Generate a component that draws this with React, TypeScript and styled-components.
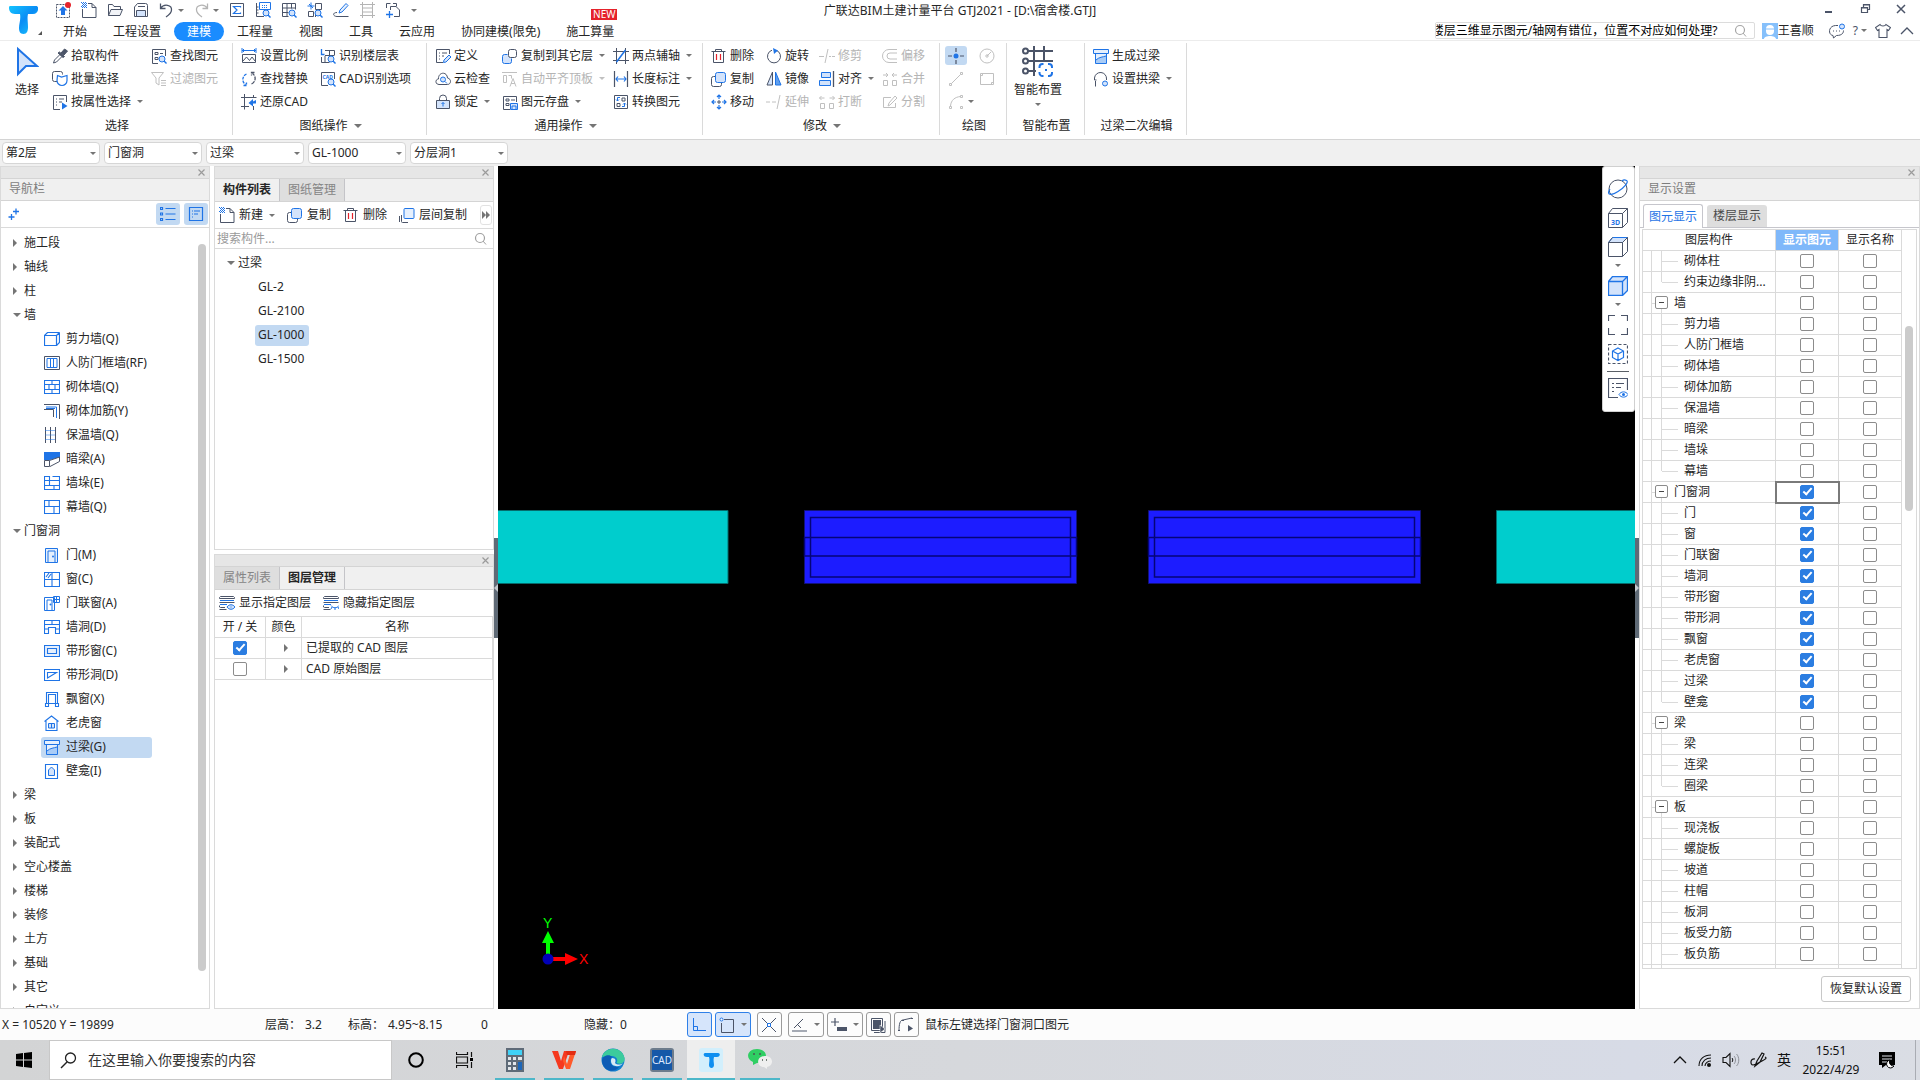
import React, { Fragment, ReactNode } from 'react';
import styled, { createGlobalStyle, css } from 'styled-components';

const c = {
  text: '#262626',
  slate: '#4b5468',
  blue: '#1f74e6',
  pale: '#d3e3fb',
  selected: '#c2d9f2',
  line: '#dadada',
  grey: '#f0f0f0',
  strip: '#e6e6e6',
  disabled: '#b4b4b4',
};

const GlobalStyle = createGlobalStyle`
  *, *::before, *::after { box-sizing: border-box; }
  body { margin: 0; background: #fff; }
  body, button, input, select, table {
    font-family: "Noto Sans", "Noto Sans CJK SC", sans-serif;
    font-size: 12px;
    line-height: 16px;
    color: ${c.text};
  }
  button { background: none; border: 0; padding: 0; margin: 0; white-space: nowrap; }
  svg { display: block; flex: none; }
`;

/* ---------- icons ---------- */

type P = { d: string; f?: string; dash?: string; w?: number };
const D = ({ d, f = 'none', dash, w = 1 }: P) => (
  <path d={d} fill={f} stroke="currentColor" strokeWidth={w} strokeDasharray={dash} />
);
const B = ({ d, f = 'none', dash, w = 1 }: P) => (
  <path d={d} fill={f} stroke={c.blue} strokeWidth={w} strokeDasharray={dash} />
);
const Lens = () => (
  <>
    <circle cx="11" cy="11" r="3" fill={c.pale} stroke={c.blue} />
    <B d="M13 13l2.5 2.5" w={1.4} />
  </>
);

const icons: Record<string, ReactNode> = {
  upload: <><D d="M1.5 2.5h13v13h-13z" dash="2 1" /><path d="M8 4l4.5 4.5H10V13H6V8.500H3.500z" fill={c.blue} /><circle cx="13" cy="3" r="3" fill="#e5222b" /></>,
  newFile: <><D d="M7 1.5h4l4 4v10H1.500V7M11 1.500V5.500h4" /><B d="M1 1.500h5M1 3.500h5M1 5.500h5" dash="1 1" /><B d="M0 .5h5M2 2.500h4M0 4.500h5" dash="1 1" /></>,
  open: <><D d="M1.500 13.500V2.500h4l1.500 2h6.500v2.500" /><D d="M1.500 13.500L4 7.500h11.500l-2.500 6z" f="#f1f3f7" /></>,
  save: <><D d="M1.500 14.500V5l3-3.500h8a2 2 0 012 2v11zM5 4.500h7" /><D d="M3.500 14.500v-6h9v6z" f={c.pale} /></>,
  undo: <D d="M6.500 6.500h-5v-5M1.500 6.500C5 1 13 3 12.500 8c0 3-2.500 5-5.500 7" w={1.3} />,
  redo: <D d="M8.500 6.500h5v-5M13.500 6.500C10 1 2 3 2.500 8c0 3 2.500 5 5.500 7" w={1.3} />,
  sum: <><D d="M1.500 1.500h13v13h-13z" /><B d="M11.500 5.500v-1h-7l3.500 3.500-3.500 3.500h7v-1" w={1.2} /></>,
  measure: <><D d="M1.500 1v13.500H9M1.500 5h2M1.500 8h2M1.500 11h2" /><B d="M7 3.500h6M7 5.500h6" dash="1 1" /><B d="M4.500 .5h11v7h-11z" /><Lens /></>,
  tableFind: <><D d="M1.500 1.500h13v6M1.500 1.500v13h6M6 1.500v13M10.500 1.500v5M1.500 6h13M1.500 10.500h6" /><Lens /></>,
  partFind: <><D d="M8.500 1.500h6v6h-6zM1.500 9.500h5v5h-5zM8.500 9v6" /><B d="M4 .5v7M.5 4h7M2 2l4 4" /><Lens /></>,
  pen: <><D d="M4 10.500c-5 0-4 4 0 4h11.500" /><B d="M6 11l1-3 6-6.500 2 2L9 10z" f="#e6f0fd" /></>,
  frame: <D d="M3.500 0v16M13.500 0v16M1 2.500h15M1 13.500h15M3.500 6h10M3.500 10h10" />,
  addPage: <><D d="M1.500 6V1.500h4M5.500 8V4.500H11l3.500 3.500v6.500H9M8 1.500h3.500v3" /><B d="M4.500 9v7M1 12.500h7" w={1.3} /></>,
  dropper: <><path d="M9 5l3.500-4L15.500 3 12 7zM7.500 4l5 4.500-1.500 1-5-4.500z" fill={c.slate} stroke={c.slate} /><D d="M8 6.500L2.500 12l-1 3 3-1L10 8.500" /></>,
  batch: <><D d="M6 10.500H2.500a2 2 0 01-2-2v-6a2 2 0 012-2h6a2 2 0 012 2v1" /><B d="M5.500 4.500l4 1.500 5.500-1.500v5a5 5 0 01-10 0z" f="#fff" w={1.2} /></>,
  byProp: <><D d="M8 15.500H1.500V1.500h13V8M4 5h1M7 5h5M4 8h1M7 8h3M4 11h1" /><path d="M10 8.500l5.500 3.500-5.500 3.500z" fill={c.blue} /></>,
  findEl: <><D d="M7 15.500H1.500V1.500h13V8M4 4.500h3v2H4zM9 5.500h3M4 9.500h3v2H4z" /><Lens /></>,
  filter: <><D d="M.5 1.500h12l-4.500 5.500v7l-3-2V7z" /><D d="M10 9.500h5M10 12h5M10 14.500h5" /></>,
  scale: <><D d="M1.500 6.500h13v8h-13zM2 13l3.500-4 3 3.500L11 9l3 4" /><B d="M1 0v5M15 0v5M1 2.500h14M3 1L1.500 2.500 3 4M13 1l1.500 1.500L13 4" /></>,
  replace: <><B d="M5.500 3a6 6 0 00-1 10.500M2.500 14.500h3v-3" dash="3 1" w={1.3} /><D d="M10.500 13a6 6 0 001-10.500M13.500 1.500h-3v3" dash="4 1" w={1.3} /></>,
  restore: <><D d="M3.500 0v15.500M0 3.500h15.500M12.500 1v2M0 12.500h8M12.500 12v4" /><path d="M15 6v3.500h-3v3L7.500 9 12 5v2.500z" fill={c.blue} /></>,
  floorTable: <><D d="M5 2.500h9.500v5M5 7.500h9M9.500 2.500v12M1.500 9v5.500H9M5 8v6.500" /><B d="M1.500 1v5.500h3" w={1.3} /><Lens /></>,
  cadOpt: <><D d="M8 14.500H1.500v-13h13V8" /><text x="2.500" y="7.500" fontSize="5" fontWeight="700" fill={c.blue}>CAD</text><Lens /></>,
  define: <><D d="M8 14.500H1.500v-13h13V6M4 5h1M7 5h5M4 8h1M7 8h2M4 11h1" /><B d="M8.500 14.500l.5-2.500 5-5 2 2-5 5z" f={c.pale} /></>,
  cloud: <><D d="M4 13.500C0 13.500 0 8 3.500 8 3 1 12 0 12.500 7c4.500 1 3.500 6.500 0 6.500z" /><circle cx="8" cy="8.500" r="2.500" fill={c.pale} stroke={c.blue} /><B d="M10 10.500l2 2" /></>,
  lock: <><D d="M4.500 6V4.500a3.500 3.500 0 017 0V6" /><D d="M1.500 6.500h13v8h-13z" f={c.pale} /><B d="M8 8.500v4M6.500 10L8 8.500 9.500 10" /></>,
  copyFloor: <><B d="M5.500 6.500H2.500a2 2 0 00-2 2v5a2 2 0 002 2h5a2 2 0 002-2v-3" f={c.pale} /><D d="M8.500 1.500h4a2 2 0 012 2v4a2 2 0 01-2 2h-4a2 2 0 01-2-2v-4a2 2 0 012-2z" f="#fff" /></>,
  alignTop: <D d="M0 1.500h15M1.500 4.500h3v7h-3zM6.500 4.500h3v3M8 15.500l3-8 3 8M9 12.500h4" />,
  store: <><D d="M8 15.500H1.500v-13h13V8M4 5h3v2H4zM9 6h4M4 9.500h3v2H4z" /><B d="M8.500 9.500h7v6h-7zM10 15v-3h4v3" f={c.pale} /></>,
  axis: <><D d="M3.500 0v16M12.500 0v16M0 3.500h16M0 12.500h16" /><B d="M3.500 14L12.500 2" w={1.500} /></>,
  length: <><D d="M1.500 0v16M14.500 0v16" w={1.2} /><B d="M3 8h10M5 5.500L3 8l2 2.500M11 5.500L13 8l-2 2.500" w={1.2} /></>,
  convert: <><D d="M1.500 1.500h13v13h-13zM9 4h3v3H9zM4 9.500h3v3H4z" /><B d="M7 3.500H4.500V7M3 5.500L4.500 7 6 5.500M9 12.500h2.500V9M10 10.500L11.500 9l1.500 1.500" /></>,
  trash: <><D d="M.5 3.500h14M4.500 3.500v-2h6v2M2.500 3.500v11h10v-11" /><path d="M5.500 6v6M9.500 6v6" stroke="#e5222b" strokeWidth="1.200" /></>,
  copy: <><D d="M4.500 5.500H2.500a2 2 0 00-2 2v6a2 2 0 002 2h6a2 2 0 002-2v-2" /><B d="M6.500 1.500h6a2 2 0 012 2v6a2 2 0 01-2 2h-6a2 2 0 01-2-2v-6a2 2 0 012-2z" f={c.pale} /></>,
  move: <><B d="M8 1v4M8 11v4M1 8h4M11 8h4M6 3l2-2 2 2M6 13l2 2 2-2M3 6L1 8l2 2M13 6l2 2-2 2" w={1.2} /><D d="M6 8h4M8 6v4" /></>,
  rotate: <><D d="M10 2.200a6.500 6.500 0 11-4 0" /><path d="M7 0l5 2.500L8 6z" fill={c.blue} /></>,
  mirror: <><path d="M6.500 1v13H1z" fill={c.pale} stroke={c.slate} /><path d="M9.500 1v13H15z" fill="#5f9eee" stroke={c.blue} /></>,
  trim: <D d="M0 8.500h5M10 8.500h2M13 8.500h3M9 1L6 15" />,
  extend: <D d="M0 8h4M6 8h4M14 1l-3 14" />,
  align: <><B d="M2.500 1.500h9v5h-9zM.5 9.500h11v5H.5z" f={c.pale} /><D d="M14.500 0v16" w={1.3} /></>,
  breakIt: <D d="M1.500 9.500h4v5h-4zM10.500 9.500h4v5h-4zM.5 4h5M2.500 2L.5 4l2 2M10.500 4h5M13.500 2l2 2-2 2" />,
  merge: <D d="M1.500 9.500h4v5h-4zM10.500 9.500h4v5h-4zM1 4h5M4 2l2 2-2 2M15 4h-5M12 2l-2 2 2 2" />,
  offset: <D d="M15 1.500H7a6 6 0 000 13h8M15 5H8a3 3 0 000 6h7" />,
  split: <D d="M9 3.500H1.500v10h12V9M6 12l1-3 6-7 2 2-7 7z" />,
  point: <><D d="M8 0v4M8 12v4M0 8h4M12 8h4" w={1.2} /><circle cx="8" cy="8" r="2.500" fill={c.blue} /></>,
  circle: <><D d="M8 1a7 7 0 100 14A7 7 0 108 1M8 8l4-4" /><circle cx="8" cy="8" r="1.200" fill="none" stroke="currentColor" /></>,
  segment: <D d="M3.500 12.500l9-9M1.500 12.500h2v2h-2zM12.500 1.500h2v2h-2z" />,
  rect: <D d="M1.500 2.500h13v11h-13zM1.500 4.500h2v-2M12.500 13.500v-2h2" />,
  arc: <D d="M2.500 12C3 6 7 3 12.500 2.500M1.500 12.500h2v2h-2zM12.500 1.500h2v2h-2zM12.500 12.500h2v2h-2z" />,
  lintel: <><B d="M.5 1.500h15v4H.5zM2.500 5.500v10h11v-10" f="#e6f0fd" /><path d="M3 15v-3c3-3 7-3 10-4v7z" fill="#a9ccf7" /><B d="M3 12c3-3 7-3 10-4" /></>,
  arch: <><D d="M2.500 15.500V10M13.500 9V8a6 6 0 00-12-1v2h2" /><circle cx="12" cy="12.500" r="2.500" fill={c.pale} stroke={c.blue} /></>,
  plus2: <B d="M4.500 8v6M1.500 11h6M9 2.500v6M6 5.500h6" w={1.3} />,
  list: <B d="M5.500 2.500h10M5.500 8h10M5.500 13.500h10M.5 1.500h2v2h-2zM.5 7h2v2h-2zM.5 12.500h2v2h-2z" w={1.2} />,
  panel: <B d="M1.500 1.500h13v13h-13zM4 5h1M6 5h6M4 8h1M6 8h4M4 11h1" w={1.2} />,
  floors: <><D d="M2.500 8v6.500a1 1 0 001 1H9M.5 9v6" /><B d="M6 1.500h8a1 1 0 011 1v8a1 1 0 01-1 1H6a1 1 0 01-1-1v-8a1 1 0 011-1z" f="#e6f0fd" /></>,
  showLayer: <><D d="M.5 3.500v-1l1-1h13l1 1v1zM.5 10.500V12l1 .5H6M.5 14.500h7" /><D d="M.5 7.500h15" /><B d="M1 5.500h14M1 9.500h7" /><B d="M8 12c2-3 6-3 8 0-2 3-6 3-8 0zM11.500 12h1" f={c.pale} /></>,
  hideLayer: <><D d="M.5 3.500v-1l1-1h13l1 1v1zM.5 10.500V12l1 .5H6M.5 14.500h7" /><D d="M.5 7.500h15" /><B d="M1 5.500h14M1 9.500h7" /><B d="M8 10.500c2 3 6 3 8 0M9 12l-1 2M12 12.500v2.500M15 12l1 2" /></>,
  wall: <B d="M.5 4.500h12v10H.5zM.5 4.500l3-3h12M15.500 1.500v10l-3 3M12.500 4.500l3-3" w={1.2} />,
  civil: <><D d="M.5 1.500h15v13H.5z" /><B d="M3 3.500h10v9H3zM6.500 3.500v9M9.500 3.500v9" /></>,
  brick: <B d="M.5 1.500h15v13H.5zM.5 5.500h15M.5 10.500h15M8 1.500v4M5 5.500v5M11 5.500v5M8 10.500v4" w={1.1} />,
  rebar: <><D d="M0 1.500h15.500V16M0 6.500h9.500V14" /><B d="M2 4h10.500v11M2 5.500h9" /></>,
  insul: <><D d="M1.500 0v16M6.500 0v16M11.500 0v16" /><B d="M1.500 3.500h10M1.500 8h10M1.500 12.500h10" dash="1 1" /></>,
  hidden: <><path d="M0 1h16v5L6 9H0z" fill={c.blue} /><D d="M.5 9.500h5v6h-5zM5.500 9.500L15.500 6v4.500L6 15.500" /></>,
  pier: <B d="M.5 1.500h5v4h-5zM8.500 1.500h7v13H.5V5.500h15M.5 10.500h15M5.500 5.500v5M10 10.500v4" w={1.1} />,
  curtain: <B d="M.5 1.500h15v13H.5zM.5 7.500h15M5 1.500v6M10 7.500v7" w={1.1} />,
  door: <><B d="M1.500 15.500v-14h12v14zM4 15V4h7v11" f="#e6f0fd" /><circle cx="9" cy="9.500" r="1" fill={c.blue} /></>,
  window: <B d="M.5 1.500h15v14H.5zM8 1.500v14M.5 8.500h15M2 6l3-4M4 7l3-4" w={1.1} />,
  doorWin: <><B d="M.5 15.500v-13h10v13zM3 15V5h5v10M9.500 1.500h6v6h-6zM12.500 1.500v6M9.500 4.500h6" f="#fff" /><circle cx="6.500" cy="9.500" r="1" fill={c.blue} /></>,
  hole: <B d="M.5 1.500h15v13h-4v-6h-7v6h-4zM.5 5.500h15M8 1.500v4M.5 10h4M11.500 10h4" w={1.1} />,
  strip: <B d="M.5 2.500h15v11H.5zM3.500 5.500h9v5h-9z" w={1.1} f="#e6f0fd" />,
  stripHole: <B d="M.5 2.500h15v11H.5zM3.500 11V5.500h9z" w={1.1} />,
  bay: <B d="M2.500 12.500v-11h11v11M4.500 12V3.500h7V12M1.500 12.500h3v3h-3zM11.500 12.500h3v3h-3zM4.500 12.500h7" w={1.1} />,
  dormer: <><B d="M.5 6.500L7.500 1l7 5.500M2 6v9.500h11V6" w={1.1} /><B d="M4.500 8.500h6v4.500h-6zM7.500 8.500v4.500" f={c.pale} /></>,
  niche: <><B d="M1.500 1.500h12v14h-12z" w={1.1} /><B d="M4.500 12.500V7l3-3 3 3v5.500z" f={c.pale} /></>,
  search: <><circle cx="7" cy="7" r="4.500" fill="none" stroke="currentColor" strokeWidth="1.200" /><D d="M10 10l3 3.500" /></>,
  avatar: <><path d="M0 0h16v16H0z" fill="#86c0fb" /><path d="M4 6a4 4 0 018 0v2a4 4 0 01-8 0zM2 16c0-4 12-4 12 0z" fill="#fff" /><path d="M3 6h10" stroke="#86c0fb" /></>,
  chat: <><D d="M9 2.500H6.500C-1 3-1 12 4 12.500l.5 2.500 3-2.500c6 0 7-3 7-5M4 8h1M7 8h1M10 8h1" /><circle cx="13" cy="3.500" r="2.500" fill={c.pale} stroke={c.blue} /></>,
  shirt: <D d="M5 1.500c1 2 5 2 6 0l4.500 3-2 3-1.500-1v8H4v-8l-1.500 1-2-3z" w={1.1} />,
  up: <D d="M2 11l6-6 6 6" w={1.3} />,
  min: <D d="M4 11h7" w={2} />,
  max: <D d="M4.500 6.500h6v5h-6zM6.500 6V3.500h6v5H11M4.500 7h6M6.500 4h6" w={1.2} />,
  close: <D d="M4 4l8 8M12 4l-8 8" w={1.5} />,
  ortho: <B d="M2.500 1v12.500H15M2.500 9.500h4v4" />,
  snapBox: <><D d="M5 2.500h9.500v13h-12V6" /><circle cx="2.500" cy="2.500" r="1.500" fill="#fff" stroke={c.blue} /></>,
  cross: <><D d="M1 1l14 14M15 1L1 15" /><path d="M6.500 6.500h3v3h-3z" fill="#fff" stroke={c.blue} /></>,
  angle: <><path d="M0 13h15v2H0z" fill="#a5aab4" /><D d="M2 11l9-9M6 8l3 3" /></>,
  offsetPt: <><D d="M4 1v8M0 5h8" w={1.2} /><path d="M6 10h10v4H6z" fill={c.slate} /></>,
  stack: <><path d="M3 3h8v9H3z" fill={c.slate} /><D d="M1.500 1.500h11v12h-11zM4 15.500h11V4" /><path d="M10 8l5 4-5 4z" fill={c.slate} stroke="#fff" strokeWidth=".5" /></>,
  curve: <><D d="M1 14c0-7 1-11 4-11l9-2M0 13.500h2M4 3.500h2M13 1.500h2" /><path d="M10 8l5 3.500-5 3z" fill={c.slate} /></>,
};

const icons20: Record<string, ReactNode> = {
  orbit: <><circle cx="10" cy="10" r="9" fill="none" stroke="currentColor" /><B d="M2 10C-2 16 3 17 10 12.500S21 3 18.500 1.500 14 2 14 2" w={1.2} /></>,
  cube3d: <><D d="M.5 5.500h14v14H.5zM.5 5.500l4-5h15v14l-5 5M14.500 5.500l5-5" /><text x="3" y="16.500" fontSize="7" fontWeight="700" fill={c.blue}>3D</text></>,
  cubeTop: <><B d="M.5 5.500l4-5h15l-5 5z" f={c.pale} /><D d="M.5 5.500h14v14H.5zM19.500 .5v14l-5 5M.5 5.500l4-5M14.500 5.500l5-5" /></>,
  cubeBlue: <B d="M.5 5.500h14v14H.5zM.5 5.500l4-5h15v14l-5 5M14.500 5.500l5-5" f={c.pale} w={1.3} />,
  fit: <D d="M.5 6V.5H7M13 .5h6.500V6M19.500 13v6.500H13M7 19.500H.5V13" w={1.2} />,
  pickCube: <><D d="M.5 .5h19v19H.5z" dash="3 2" w={1.2} /><B d="M10 4l5.500 3v6.500L10 16.500l-5.500-3V7zM4.500 7l5.500 3 5.500-3M10 10v6.500" w={1.2} /></>,
  listEye: <><D d="M10 19.500H.5V.5h19V12M4 5.500h2M8 5.500h8M4 9.500h2M8 9.500h5M4 13.500h2" w={1.2} /><B d="M11 16.500c2-3.500 7-3.500 9 0-2 3.500-7 3.500-9 0z" f="#fff" /><circle cx="15.500" cy="16.500" r="1.500" fill={c.blue} /></>,
};

const Icon = ({ name }: { name: string }) => (
  <svg width="16" height="16" viewBox="0 0 16 16" aria-hidden="true">{icons[name]}</svg>
);
const Icon20 = ({ name }: { name: string }) => (
  <svg width="20" height="20" viewBox="0 0 20 20" aria-hidden="true">{icons20[name]}</svg>
);

const Caret = styled.span<{ $big?: boolean }>`
  flex: none;
  width: 0;
  height: 0;
  border: ${p => (p.$big ? 4 : 3)}px solid transparent;
  border-bottom-width: 0;
  border-top-color: #757575;
`;
const CaretRight = styled.span`
  flex: none;
  width: 0;
  height: 0;
  border: 4px solid transparent;
  border-right-width: 0;
  border-left-color: #757575;
`;

/* ---------- shell ---------- */

const Shell = styled.div`
  display: flex;
  flex-direction: column;
  height: 100vh;
  min-height: 600px;
  overflow: hidden;
`;

/* ---------- header ---------- */

const Header = styled.header`
  flex: none;
  display: grid;
  grid-template-columns: 50px 1fr auto 1fr 50px;
  grid-template-rows: 22px 19px;
  background: linear-gradient(#ececec, #ececec) left bottom / 100% 1px no-repeat #fff;
`;
const LogoButton = styled.button`
  grid-row: 1 / 3;
  display: flex;
  align-items: flex-end;
  padding: 0 0 6px 8px;
`;
const Corner = styled.span`
  border: 2px solid #555;
  border-top-color: transparent;
  border-left-color: transparent;
`;
const QuickBar = styled.div`
  display: flex;
  gap: 10px;
  padding: 2px 0 0 5px;
  height: 18px;
`;
const IconButton = styled.button<{ $off?: boolean }>`
  display: flex;
  align-items: center;
  gap: 3px;
  color: ${p => (p.$off ? c.disabled : c.slate)};
`;
const WindowTitle = styled.h1`
  margin: 0;
  font-size: 12px;
  font-weight: 400;
  line-height: 22px;
`;
const WindowButtons = styled.div`
  grid-column: 4 / 6;
  display: flex;
  justify-content: flex-end;
  gap: 20px;
  padding-right: 11px;
  height: 18px;
`;
const TabRow = styled.div`
  grid-column: 2 / 6;
  display: flex;
  min-width: 0;
`;
const Tab = styled.button<{ $active?: boolean }>`
  position: relative;
  padding: 0 13px;
  height: 19px;
  border-radius: 10px;
  ${p => p.$active && css`background: #1a8cff; color: #fff;`}
`;
const NewBadge = styled.span`
  position: absolute;
  right: 10px;
  top: -13px;
  width: 26px;
  height: 11px;
  background: #e5222b;
  color: #fff;
  font-size: 10px;
  line-height: 11px;
  text-align: center;
`;
const HeaderTools = styled.div`
  margin-left: auto;
  display: flex;
  align-items: center;
  height: 17px;
  gap: 8px;
  padding-right: 5px;
`;
const HelpSearch = styled.label`
  display: flex;
  align-items: center;
  width: 320px;
  height: 17px;
  border: 1px solid #dcdcdc;
  border-radius: 2px;
  padding-right: 5px;
  color: #a5a5a5;
  overflow: hidden;
  margin-right: -1px;
  input {
    flex: 1;
    min-width: 0;
    height: 15px;
    border: 0;
    padding: 0;
    outline: 0;
    text-indent: -4px;
    color: #000;
  }
`;
const User = styled.button`
  display: flex;
  align-items: center;
  margin-right: 7px;
`;

const quick: [string, boolean?, boolean?][] = [
  ['upload'], ['newFile'], ['open'], ['save'], ['undo', true], ['redo', true, true], ['sum'],
  ['measure'], ['tableFind'], ['partFind'], ['pen'], ['frame', false, true], ['addPage'],
];
const tabs = ['开始', '工程设置', '建模', '工程量', '视图', '工具', '云应用', '协同建模(限免)', '施工算量'];

const Logo = () => (
  <svg width="30" height="30" viewBox="0 0 30 30" aria-hidden="true">
    <defs>
      <linearGradient id="logo" x1="0" y1="0" x2="1" y2="1">
        <stop offset="0" stopColor="#14c4ff" />
        <stop offset=".5" stopColor="#0a8df5" />
        <stop offset="1" stopColor="#1ccaff" />
      </linearGradient>
    </defs>
    <path d="M2 1h26c2 0 2.500 2 2 4-.5 2-2 4-5 4h-5c-1 4 0 8 0 13 0 4-1 7-4.500 7S11 26 11 23c0-4 2-9 1-14H7C3 9 1 6 1 3c0-1 0-2 1-2z" fill="url(#logo)" />
  </svg>
);

/* ---------- ribbon ---------- */

const Ribbon = styled.div`
  flex: none;
  display: flex;
  height: 99px;
  padding: 2px 0 4px;
  border-bottom: 1px solid #d4d4d4;
`;
const Group = styled.section<{ $w: number }>`
  flex: none;
  display: flex;
  flex-direction: column;
  width: ${p => p.$w}px;
  border-right: 1px solid ${c.line};
`;
const GroupBody = styled.div<{ $cols: string; $flow?: string; $pad?: number }>`
  display: grid;
  grid-template-columns: ${p => p.$cols};
  grid-template-rows: repeat(3, 23px);
  grid-auto-flow: ${p => p.$flow || 'column'};
  justify-items: start;
  padding-top: 1px;
  padding-left: ${p => (p.$pad === undefined ? 8 : p.$pad)}px;
`;
const GroupLabel = styled.div`
  flex: 1;
  display: flex;
  align-items: center;
  justify-content: center;
  gap: 6px;
  padding: 4px 0 0 2px;
`;
const ToolButton = styled.button<{ $off?: boolean; $tight?: boolean }>`
  display: flex;
  align-items: center;
  gap: ${p => (p.$tight ? 4 : 3)}px;
  color: ${p => (p.$off ? c.disabled : c.text)};
  svg { color: ${p => (p.$off ? '#c0c0c0' : c.slate)}; }
  ${Caret} {
    margin-left: ${p => (p.$tight ? 2 : 3)}px;
    ${p => p.$off && css`border-top-color: #c0c0c0;`}
  }
`;
const BigButton = styled.button`
  grid-row: span 3;
  justify-self: center;
  display: flex;
  flex-direction: column;
  align-items: center;
  gap: 5px;
  padding: 1px 0 0 2px;
  color: ${c.slate};
  span { color: ${c.text}; }
`;
const DrawButton = styled.button<{ $on?: boolean }>`
  display: flex;
  align-items: center;
  gap: 4px;
  align-self: center;
  height: 19px;
  padding: 0 3px;
  border-radius: 3px;
  color: ${p => (p.$on ? c.slate : '#c0c0c0')};
  background: ${p => (p.$on ? c.selected : 'none')};
`;

type Tool = [icon: string, label: string, caret?: boolean, off?: boolean];
const Tools = ({ items }: { items: Tool[] }) => (
  <>
    {items.map(([icon, label, caret, off]) => (
      <ToolButton key={label} $off={off} disabled={off}>
        <Icon name={icon} />{label}{caret && <Caret />}
      </ToolButton>
    ))}
  </>
);

const sheetTools: Tool[] = [['scale', '设置比例'], ['replace', '查找替换'], ['restore', '还原CAD'], ['floorTable', '识别楼层表'], ['cadOpt', 'CAD识别选项']];
const commonTools: Tool[] = [
  ['define', '定义'], ['cloud', '云检查'], ['lock', '锁定', true],
  ['copyFloor', '复制到其它层', true], ['alignTop', '自动平齐顶板', true, true], ['store', '图元存盘', true],
  ['axis', '两点辅轴', true], ['length', '长度标注', true], ['convert', '转换图元'],
];
const editTools: Tool[] = [
  ['trash', '删除'], ['copy', '复制'], ['move', '移动'],
  ['rotate', '旋转'], ['mirror', '镜像'], ['extend', '延伸', false, true],
  ['trim', '修剪', false, true], ['align', '对齐', true], ['breakIt', '打断', false, true],
  ['offset', '偏移', false, true], ['merge', '合并', false, true], ['split', '分割', false, true],
];

/* ---------- context selectors ---------- */

const SelectBar = styled.div`
  flex: none;
  display: flex;
  gap: 4px;
  height: 26px;
  padding: 2px 2px;
  background: ${c.grey};
`;
const SelectBox = styled.label`
  display: grid;
  grid-template-columns: 98px;
  align-items: center;
  select {
    grid-area: 1 / 1;
    appearance: none;
    width: 100%;
    height: 22px;
    padding: 0 14px 0 3px;
    background: #fff;
    border: 1px solid #d6d6d6;
    border-radius: 4px;
  }
  ${Caret} { grid-area: 1 / 1; justify-self: end; margin-right: 4px; pointer-events: none; }
`;

/* ---------- panels ---------- */

const Main = styled.main`
  flex: 1;
  min-height: 0;
  display: flex;
`;
const Panel = styled.section`
  flex: 1;
  min-height: 0;
  display: flex;
  flex-direction: column;
  border: 1px solid ${c.line};
  background: #fff;
`;
const Side = styled.aside<{ $w: number }>`
  flex: none;
  width: ${p => p.$w}px;
  display: flex;
  flex-direction: column;
  min-height: 0;
`;
const Fixed = styled.div`
  flex: 0 0 384px;
  display: flex;
  margin-bottom: 4px;
`;
const Grip = styled.div`
  flex: none;
  display: flex;
  justify-content: flex-end;
  align-items: center;
  height: 11px;
  padding-right: 2px;
  background: ${c.strip};
  button { color: #9a9a9a; }
`;
const CloseMark = () => (
  <button aria-label="关闭">
    <svg width="11" height="9" viewBox="0 0 11 9"><D d="M2.500 1.500l6 6M8.500 1.500l-6 6" w={1.2} /></svg>
  </button>
);
const PanelTitle = styled.h2`
  flex: none;
  margin: 0;
  height: 23px;
  padding: 0 8px;
  font-size: 12px;
  font-weight: 400;
  line-height: 20px;
  color: #7d7d7d;
  background: ${c.grey};
  border: solid #d4d4d4;
  border-width: 1px 0;
`;
const NavTools = styled.div`
  flex: none;
  display: flex;
  align-items: center;
  gap: 4px;
  height: 27px;
  padding: 0 1px 0 6px;
  border-bottom: 1px solid ${c.line};
  > :first-child { margin-right: auto; }
`;
const Toggle = styled.button`
  display: flex;
  align-items: center;
  justify-content: center;
  width: 24px;
  height: 22px;
  border-radius: 3px;
  background: ${c.selected};
`;
const ScrollArea = styled.div`
  flex: 1;
  min-height: 0;
  display: flex;
`;
const ScrollBody = styled.div`
  flex: 1;
  min-width: 0;
  overflow: hidden;
`;
const Track = styled.div<{ $rows: string; $w: number }>`
  flex: none;
  width: ${p => p.$w}px;
  display: grid;
  grid-template-rows: ${p => p.$rows};
  justify-content: center;
  i { grid-row: 2; width: 8px; border-radius: 4px; background: #cbcbcb; }
`;
const Tree = styled.ul`
  list-style: none;
  margin: 0;
  padding: 3px 0 0;
`;
const TreeRow = styled.li`
  display: flex;
  align-items: center;
  height: 24px;
`;
const Branch = styled.button<{ $pad: number }>`
  display: flex;
  align-items: center;
  padding-left: ${p => p.$pad}px;
  > i { display: flex; width: 11px; }
`;
const Leaf = styled.button<{ $on?: boolean }>`
  display: flex;
  align-items: center;
  gap: 6px;
  width: 111px;
  height: 21px;
  margin-left: 40px;
  padding-left: 3px;
  border-radius: 3px;
  background: ${p => (p.$on ? c.selected : 'none')};
  color: ${c.slate};
  span { color: ${c.text}; }
`;
const MemberLeaf = styled.button<{ $on?: boolean }>`
  height: 21px;
  margin-left: 40px;
  padding: 0 5px 0 3px;
  border-radius: 3px;
  background: ${p => (p.$on ? c.selected : 'none')};
`;
const MemberTree = styled(Tree)`
  padding-top: 2px;
`;

const nav: [string, [string, string][]?][] = [
  ['施工段'], ['轴线'], ['柱'],
  ['墙', [['wall', '剪力墙(Q)'], ['civil', '人防门框墙(RF)'], ['brick', '砌体墙(Q)'], ['rebar', '砌体加筋(Y)'], ['insul', '保温墙(Q)'], ['hidden', '暗梁(A)'], ['pier', '墙垛(E)'], ['curtain', '幕墙(Q)']]],
  ['门窗洞', [['door', '门(M)'], ['window', '窗(C)'], ['doorWin', '门联窗(A)'], ['hole', '墙洞(D)'], ['strip', '带形窗(C)'], ['stripHole', '带形洞(D)'], ['bay', '飘窗(X)'], ['dormer', '老虎窗'], ['lintel', '过梁(G)'], ['niche', '壁龛(I)']]],
  ['梁'], ['板'], ['装配式'], ['空心楼盖'], ['楼梯'], ['装修'], ['土方'], ['基础'], ['其它'], ['自定义'],
];

const SideTabs = styled.div`
  flex: none;
  display: flex;
  height: 24px;
  background: ${c.grey};
  border: solid #d4d4d4;
  border-width: 1px 0;
`;
const SideTab = styled.button<{ $on?: boolean }>`
  padding: 0 8px;
  border-right: 1px solid #c4c4c8;
  background: ${p => (p.$on ? c.grey : '#dedede')};
  color: ${p => (p.$on ? c.text : '#858585')};
  font-weight: ${p => (p.$on ? 700 : 400)};
`;
const PanelTools = styled.div`
  flex: none;
  display: flex;
  align-items: center;
  gap: 12px;
  height: 27px;
  padding-left: 4px;
  border-bottom: 1px solid ${c.line};
`;
const MoreButton = styled.button`
  display: flex;
  align-items: center;
  justify-content: center;
  margin: 0 1px 0 auto;
  width: 12px;
  height: 20px;
  border: 1px solid #e2e2e2;
  border-radius: 3px;
`;
const SearchRow = styled.label`
  flex: none;
  display: flex;
  align-items: center;
  height: 20px;
  padding: 0 4px 0 2px;
  border-bottom: 1px solid ${c.line};
  color: #a0a0a0;
  input { flex: 1; min-width: 0; border: 0; padding: 0; outline: 0; }
  input::placeholder { color: #9a9a9a; opacity: 1; }
`;

const Check = styled.input.attrs({ type: 'checkbox' })`
  appearance: none;
  display: block;
  width: 14px;
  height: 14px;
  margin: 0 auto;
  border: 1px solid #8c8c8c;
  border-radius: 2px;
  background: #fff;
  &:checked { background: #2b7de1; border-color: #2b7de1; }
  &:checked::after {
    content: '';
    display: block;
    width: 5px;
    height: 9px;
    margin: 0 0 0 4px;
    border: solid #fff;
    border-width: 0 2px 2px 0;
    transform: rotate(42deg);
  }
`;
const Table = styled.table`
  width: 100%;
  table-layout: fixed;
  border-collapse: separate;
  border-spacing: 0;
  th, td {
    height: 21px;
    padding: 0;
    border: solid ${c.line};
    border-width: 0 1px 1px 0;
    font-weight: 400;
    line-height: 20px;
    white-space: nowrap;
    overflow: hidden;
  }
`;
const LayerTable = styled(Table)`
  th:nth-child(1) { width: 51px; }
  th:nth-child(2) { width: 36px; }
  td:nth-child(3) { padding-left: 4px; }
  ${CaretRight} { display: block; margin: 0 0 0 18px; }
`;

/* ---------- drawing area ---------- */

const Gutter = styled.div`
  flex: none;
  width: 4px;
  display: flex;
  align-items: center;
`;
const Handle = styled.button<{ $left?: boolean }>`
  display: flex;
  align-items: center;
  width: 4px;
  height: 100px;
  background: #5f6a76;
  ${CaretRight} {
    border-left-color: #c3c8ce;
    ${p => p.$left && css`transform: scaleX(-1);`}
  }
`;
const Canvas = styled.div`
  position: relative;
  flex: 1;
  min-width: 0;
  background: #000;
  overflow: hidden;
`;
const Plan = styled.svg`
  width: 100%;
  height: 100%;
`;
const Axis = styled.svg`
  position: absolute;
  left: 41px;
  bottom: 39px;
`;
const ViewTools = styled.div`
  position: absolute;
  top: 0;
  right: 0;
  display: flex;
  flex-direction: column;
  gap: 9px;
  width: 33px;
  padding: 12px 4px 13px;
  background: #fff;
  border: 1px solid #d0d0d0;
  border-radius: 3px;
  color: ${c.slate};
  button { display: flex; flex-direction: column; align-items: center; gap: 7px; width: 22px; color: inherit; }
  button:last-child { margin-top: -2px; padding: 6px 0 0; border-top: 1px solid #5a5f66; }
`;

const Opening = ({ x }: { x: number }) => (
  <g>
    <path d={`M${x} 344.500h272v73h-272z`} fill="#1c1cff" stroke="#12127a" />
    <path d={`M${x + 6} 351.500h260v59.500h-260zM${x} 371.500h272v18.500h-272z`} fill="none" stroke="#050578" strokeWidth="1.500" />
  </g>
);

/* ---------- display settings ---------- */

const SettingTabs = styled.div`
  flex: none;
  display: flex;
  align-items: flex-end;
  gap: 4px;
  height: 27px;
  padding-left: 3px;
  border-bottom: 1px solid #c6c6cc;
`;
const SettingTab = styled.button<{ $on?: boolean }>`
  width: 60px;
  height: 22px;
  border-radius: 3px 3px 0 0;
  background: #dedede;
  color: #4a4a4a;
  ${p => p.$on && css`
    height: 24px;
    margin-bottom: -1px;
    background: #fff;
    color: ${c.blue};
    border: 1px solid #c6c6cc;
    border-bottom: 0;
  `}
`;
const GridFrame = styled.div`
  flex: 1;
  min-height: 0;
  display: flex;
  margin: 1px 2px 0;
  border: 1px solid ${c.line};
`;
const SettingTable = styled(Table)`
  th:nth-child(2), th:nth-child(3) { width: 63px; }
  th:nth-child(2) { background: #7fb8fa; color: #fff; font-weight: 700; }
`;
const CheckCell = styled.td<{ $focus?: boolean }>`
  ${p => p.$focus && css`outline: 2px solid #7a7a7a; outline-offset: -1px;`}
`;
const TreeCell = styled.div`
  display: flex;
  align-items: center;
  height: 20px;
`;
const Guide = styled.i<{ $w: number; $half?: boolean }>`
  flex: none;
  align-self: flex-start;
  width: ${p => p.$w}px;
  height: ${p => (p.$half ? 10 : 20)}px;
  border-right: 1px solid ${c.line};
`;
const Stub = styled.i<{ $w: number }>`
  flex: none;
  width: ${p => p.$w}px;
  height: 1px;
  background: ${c.line};
`;
const Fold = styled.div`
  display: flex;
  flex-direction: column;
  align-items: center;
  height: 20px;
  padding-top: 3px;
  button {
    width: 13px;
    height: 13px;
    border: 1px solid #8c8c8c;
    border-radius: 2px;
    display: flex;
    align-items: center;
    justify-content: center;
  }
  button::before { content: ''; width: 5px; height: 1px; background: #444; }
  &::after { content: ''; flex: 1; width: 1px; background: ${c.line}; }
`;
const CellText = styled.span`
  margin-left: 6px;
  overflow: hidden;
  text-overflow: ellipsis;
`;
const PanelFoot = styled.div`
  flex: none;
  display: flex;
  justify-content: flex-end;
  padding: 7px 8px 6px;
`;
const ResetButton = styled.button`
  width: 90px;
  height: 26px;
  border: 1px solid #c8c8c8;
  border-radius: 3px;
`;

const settings: [string, boolean, string[]][] = [
  ['', false, ['砌体柱', '约束边缘非阴...']],
  ['墙', false, ['剪力墙', '人防门框墙', '砌体墙', '砌体加筋', '保温墙', '暗梁', '墙垛', '幕墙']],
  ['门窗洞', true, ['门', '窗', '门联窗', '墙洞', '带形窗', '带形洞', '飘窗', '老虎窗', '过梁', '壁龛']],
  ['梁', false, ['梁', '连梁', '圈梁']],
  ['板', false, ['现浇板', '螺旋板', '坡道', '柱帽', '板洞', '板受力筋', '板负筋', '']],
];

/* ---------- status bar and taskbar ---------- */

const Status = styled.footer`
  flex: none;
  display: flex;
  align-items: center;
  height: 31px;
  padding-left: 2px;
  background: #fcfcfc;
`;
const Field = styled.span<{ $w: number }>`
  flex: none;
  width: ${p => p.$w}px;
  white-space: nowrap;
`;
const StatusGroup = styled.div`
  display: flex;
  gap: 3px;
  margin-right: 6px;
`;
const StatusButton = styled.button<{ $on?: boolean; $wide?: boolean }>`
  display: flex;
  align-items: center;
  justify-content: space-between;
  width: ${p => (p.$wide ? 36 : 25)}px;
  height: 25px;
  padding: 0 3px;
  border: 1px solid ${p => (p.$on ? '#2f80e8' : '#9a9a9a')};
  border-radius: 3px;
  background: ${p => (p.$on ? '#d6e5fb' : '#fcfcfc')};
  color: ${c.slate};
`;
const Taskbar = styled.footer`
  flex: none;
  display: flex;
  height: 40px;
  background: linear-gradient(90deg, #d3d4d5, #d6d8dc 50%, #d7dbe6 85%, #dadde4);
`;
const TaskButton = styled.button<{ $run?: boolean; $on?: boolean }>`
  display: flex;
  align-items: center;
  justify-content: center;
  width: 48px;
  height: 40px;
  color: #111;
  background:
    linear-gradient(#4db7c9, #4db7c9) center bottom / ${p => (p.$on ? 48 : p.$run ? 40 : 0)}px 2px no-repeat
    ${p => (p.$on ? '#eeeeee' : 'transparent')};
`;
const TaskSearch = styled.label`
  display: flex;
  align-items: center;
  gap: 11px;
  width: 343px;
  margin-left: 1px;
  padding-left: 10px;
  background: #fff;
  border: 1px solid #c8c8c8;
  color: #222;
  input { flex: 1; min-width: 0; border: 0; padding: 0; outline: 0; font-size: 14px; line-height: 20px; }
  input::placeholder { color: #333; opacity: 1; }
`;
const Apps = styled.div`
  display: flex;
  gap: 1px;
  margin-left: 3px;
`;
const Tray = styled.div`
  display: flex;
  align-items: center;
  gap: 10px;
  margin-left: auto;
  padding-right: 4px;
  color: #111;
  button { display: flex; color: inherit; }
`;
const Ime = styled.button`
  font-size: 14px;
  line-height: 20px;
`;
const Clock = styled.time`
  width: 60px;
  margin-right: 8px;
  line-height: 19px;
  text-align: center;
  white-space: nowrap;
`;
const Peek = styled.span`
  height: 40px;
  margin-left: 9px;
  border-left: 1px solid #a9acb3;
`;

const apps: Record<string, ReactNode> = {
  calculator: <><path d="M3 0h18v24H3z" fill="#5f6b78" /><path d="M5 2h14v5H5z" fill="#3fd2f7" /><path d="M5 9h3v3H5zM10 9h3v3h-3zM5 14h3v3H5zM10 14h3v3h-3zM5 19h3v3H5zM10 19h3v3h-3zM15 9h4v3h-4z" fill="#e2e6ea" /><path d="M15 14h4v8h-4z" fill="#1d66b8" /></>,
  wps: <><path d="M0 3h6l3 10 3-10h5l-6 18H7z" fill="#f5391f" /><path d="M12 8l3 8 4-13h5l-6 18h-4l-3-8z" fill="#ff5a2b" /><path d="M14 3h10l-1 4h-8z" fill="#e32c12" /></>,
  edge: <><circle cx="12" cy="12" r="11.500" fill="#1180cf" /><path d="M1 9C4-2 21-2 23.500 10c.5 5-4 7-8 5 2-3 0-7-5-7-4 0-7 1-9.500 1z" fill="#3ccb9c" /><path d="M1 12c1-5 8-6 10-3-4 4-1 11 7 10-5 7-17 4-17-7z" fill="#0e5cb5" /><path d="M11 10c4 0 4 3 3 5 2 2 6 2 8 0-3 5-12 4-12-2 0-1 0-2 1-3z" fill="#dbe9f3" /></>,
  cad: <><rect width="24" height="24" rx="3" fill="#6d7c8c" /><rect x="2" y="2" width="20" height="20" fill="#1558a8" /><text x="2" y="16" fontSize="10" fill="#dfeaff">CAD</text></>,
  gtj: <><rect width="24" height="24" rx="3" fill="#d2effc" /><path d="M6 5h13c3 0 2 4-1 4h-3c-1 3 0 6 0 8 0 4-5 4-5 0 0-3 1-5 0-8H8C4 9 4 5 6 5z" fill="#0e8ff0" /></>,
  wechat: <><path d="M9 1c12 0 12 14 0 14l-4 2v-3C-3 11-1 1 9 1z" fill="#2fce63" /><path d="M17 8c9 0 9 10 2 11v2l-3-2c-8 0-8-11 1-11z" fill="#efefef" /><path d="M5 6h2M11 6h2M14 12h1M18 12h1" stroke="#4b5a52" strokeWidth="1.500" /></>,
};

export default function App() {
  return (
    <Shell>
      <GlobalStyle />
      <Header>
        <LogoButton aria-label="应用菜单"><Logo /><Corner /></LogoButton>
        <QuickBar>
          {quick.map(([icon, caret, off]) => (
            <IconButton key={icon} $off={off} aria-label={icon}><Icon name={icon} />{caret && <Caret />}</IconButton>
          ))}
          <IconButton aria-label="自定义"><Caret /></IconButton>
        </QuickBar>
        <WindowTitle>广联达BIM土建计量平台 GTJ2021 - [D:\宿舍楼.GTJ]</WindowTitle>
        <WindowButtons>
          <IconButton aria-label="最小化"><Icon name="min" /></IconButton>
          <IconButton aria-label="还原"><Icon name="max" /></IconButton>
          <IconButton aria-label="关闭"><Icon name="close" /></IconButton>
        </WindowButtons>
        <TabRow>
          {tabs.map((t, i) => (
            <Tab key={t} $active={i === 2}>{t}{i === 8 && <NewBadge>NEW</NewBadge>}</Tab>
          ))}
          <HeaderTools>
            <HelpSearch>
              <input aria-label="帮助搜索" defaultValue="楼层三维显示图元/轴网有错位，位置不对应如何处理?" />
              <Icon name="search" />
            </HelpSearch>
            <User><Icon name="avatar" />王喜顺</User>
            <IconButton aria-label="消息"><Icon name="chat" /></IconButton>
            <IconButton aria-label="帮助">?<Caret /></IconButton>
            <IconButton aria-label="皮肤"><Icon name="shirt" /></IconButton>
            <IconButton aria-label="收起"><Icon name="up" /></IconButton>
          </HeaderTools>
        </TabRow>
      </Header>

      <Ribbon>
        <Group $w={233}>
          <GroupBody $cols="52px 99px 1fr" $pad={0}>
            <BigButton>
              <svg width="24" height="32" viewBox="0 0 24 32"><path d="M3 4v25l8-8h11z" fill={c.pale} stroke={c.blue} strokeWidth="2" /></svg>
              <span>选择</span>
            </BigButton>
            <Tools items={[['dropper', '拾取构件'], ['batch', '批量选择'], ['byProp', '按属性选择', true], ['findEl', '查找图元'], ['filter', '过滤图元', false, true]]} />
          </GroupBody>
          <GroupLabel>选择</GroupLabel>
        </Group>
        <Group $w={194}>
          <GroupBody $cols="79px 1fr"><Tools items={sheetTools} /></GroupBody>
          <GroupLabel>图纸操作<Caret $big /></GroupLabel>
        </Group>
        <Group $w={276}>
          <GroupBody $cols="67px 111px 1fr"><Tools items={commonTools} /></GroupBody>
          <GroupLabel>通用操作<Caret $big /></GroupLabel>
        </Group>
        <Group $w={237}>
          <GroupBody $cols="55px 53px 63px 1fr"><Tools items={editTools} /></GroupBody>
          <GroupLabel>修改<Caret $big /></GroupLabel>
        </Group>
        <Group $w={67}>
          <GroupBody $cols="31px 1fr" $flow="row" $pad={5}>
            <DrawButton $on aria-label="点"><Icon name="point" /></DrawButton>
            <DrawButton aria-label="圆"><Icon name="circle" /></DrawButton>
            <DrawButton aria-label="直线"><Icon name="segment" /></DrawButton>
            <DrawButton aria-label="矩形"><Icon name="rect" /></DrawButton>
            <DrawButton aria-label="弧"><Icon name="arc" /><Caret /></DrawButton>
          </GroupBody>
          <GroupLabel>绘图</GroupLabel>
        </Group>
        <Group $w={78}>
          <GroupBody $cols="60px" $pad={0}>
            <BigButton>
              <svg width="32" height="32" viewBox="0 0 32 32">
                <D d="M6 6h25M6 16h25M6 26h8M12 1v30M22 1v15" w={2} />
                <circle cx="3.500" cy="6" r="2.500" fill="none" stroke={c.slate} strokeWidth="2" />
                <circle cx="3.500" cy="16" r="2.500" fill="none" stroke={c.slate} strokeWidth="2" />
                <circle cx="3.500" cy="26" r="2.500" fill="none" stroke={c.slate} strokeWidth="2" />
                <rect x="16" y="18" width="16" height="14" fill="#fff" />
                <B d="M17.500 23v-1a3 3 0 013-3h1M26 19h1a3 3 0 013 3v1M30 27v1a3 3 0 01-3 3h-1M21.500 31h-1a3 3 0 01-3-3v-1M23 25h2" w={2} />
              </svg>
              <span>智能布置</span>
              <Caret />
            </BigButton>
          </GroupBody>
          <GroupLabel>智能布置</GroupLabel>
        </Group>
        <Group $w={102}>
          <GroupBody $cols="1fr"><Tools items={[['lintel', '生成过梁'], ['arch', '设置拱梁', true]]} /></GroupBody>
          <GroupLabel>过梁二次编辑</GroupLabel>
        </Group>
      </Ribbon>

      <SelectBar>
        {['第2层', '门窗洞', '过梁', 'GL-1000', '分层洞1'].map(v => (
          <SelectBox key={v}><select aria-label={v}><option>{v}</option></select><Caret /></SelectBox>
        ))}
      </SelectBar>

      <Main>
        <Side $w={210}>
          <Panel>
            <Grip><CloseMark /></Grip>
            <PanelTitle>导航栏</PanelTitle>
            <NavTools>
              <IconButton aria-label="添加"><Icon name="plus2" /></IconButton>
              <Toggle aria-label="列表"><Icon name="list" /></Toggle>
              <Toggle aria-label="面板"><Icon name="panel" /></Toggle>
            </NavTools>
            <ScrollArea>
              <ScrollBody>
                <Tree>
                  {nav.map(([name, kids]) => (
                    <Fragment key={name}>
                      <TreeRow>
                        <Branch $pad={12}><i>{kids ? <Caret $big /> : <CaretRight />}</i>{name}</Branch>
                      </TreeRow>
                      {kids && kids.map(([icon, label]) => (
                        <TreeRow key={label}>
                          <Leaf $on={label === '过梁(G)'}><Icon name={icon} /><span>{label}</span></Leaf>
                        </TreeRow>
                      ))}
                    </Fragment>
                  ))}
                </Tree>
              </ScrollBody>
              <Track $w={14} $rows="16fr 727fr 37fr"><i /></Track>
            </ScrollArea>
          </Panel>
        </Side>
        <Gutter />
        <Side $w={280}>
          <Fixed>
            <Panel>
              <Grip><CloseMark /></Grip>
              <SideTabs><SideTab $on>构件列表</SideTab><SideTab>图纸管理</SideTab></SideTabs>
              <PanelTools>
                <ToolButton $tight><Icon name="newFile" />新建<Caret /></ToolButton>
                <ToolButton $tight><Icon name="copy" />复制</ToolButton>
                <ToolButton $tight><Icon name="trash" />删除</ToolButton>
                <ToolButton $tight><Icon name="floors" />层间复制</ToolButton>
                <MoreButton aria-label="更多"><CaretRight /><CaretRight /></MoreButton>
              </PanelTools>
              <SearchRow><input aria-label="搜索构件" placeholder="搜索构件..." /><Icon name="search" /></SearchRow>
              <MemberTree>
                <TreeRow><Branch $pad={12}><i><Caret $big /></i>过梁</Branch></TreeRow>
                {['GL-2', 'GL-2100', 'GL-1000', 'GL-1500'].map(g => (
                  <TreeRow key={g}><MemberLeaf $on={g === 'GL-1000'}>{g}</MemberLeaf></TreeRow>
                ))}
              </MemberTree>
            </Panel>
          </Fixed>
          <Panel>
            <Grip><CloseMark /></Grip>
            <SideTabs><SideTab>属性列表</SideTab><SideTab $on>图层管理</SideTab></SideTabs>
            <PanelTools>
              <ToolButton $tight><Icon name="showLayer" />显示指定图层</ToolButton>
              <ToolButton $tight><Icon name="hideLayer" />隐藏指定图层</ToolButton>
            </PanelTools>
            <LayerTable>
              <thead><tr><th>开 / 关</th><th>颜色</th><th>名称</th></tr></thead>
              <tbody>
                {['已提取的 CAD 图层', 'CAD 原始图层'].map((n, i) => (
                  <tr key={n}>
                    <td><Check aria-label={n} defaultChecked={i === 0} /></td>
                    <td><CaretRight /></td>
                    <td>{n}</td>
                  </tr>
                ))}
              </tbody>
            </LayerTable>
          </Panel>
        </Side>
        <Gutter><Handle $left aria-label="收起左侧"><CaretRight /></Handle></Gutter>
        <Canvas>
          <Plan viewBox="0 0 1137 843" preserveAspectRatio="xMidYMid slice">
            <path d="M-1 344.500h231v73H-1zM998.500 344.500h140v73h-140z" fill="#00cdcd" stroke="#056c6c" />
            <Opening x={306.5} />
            <Opening x={650.5} />
          </Plan>
          <Axis width="60" height="60" viewBox="0 0 60 60">
            <path d="M7 47V33H3l6-12 6 12h-4v14z" fill="#0f0" />
            <path d="M13 47h13v-4l13 6-13 6v-4H13z" fill="#f00" />
            <circle cx="9" cy="49" r="5.500" fill="#0000b8" />
            <text x="4" y="18" fontSize="14" fontFamily="Liberation Sans, sans-serif" fill="#0f0">Y</text>
            <text x="40" y="54" fontSize="14" fontFamily="Liberation Sans, sans-serif" fill="#f00">X</text>
          </Axis>
          <ViewTools>
            <button aria-label="动态观察"><Icon20 name="orbit" /></button>
            <button aria-label="三维"><Icon20 name="cube3d" /></button>
            <button aria-label="视图方向"><Icon20 name="cubeTop" /><Caret /></button>
            <button aria-label="显示样式"><Icon20 name="cubeBlue" /><Caret /></button>
            <button aria-label="全屏"><Icon20 name="fit" /></button>
            <button aria-label="选择范围"><Icon20 name="pickCube" /></button>
            <button aria-label="显示设置"><Icon20 name="listEye" /></button>
          </ViewTools>
        </Canvas>
        <Gutter><Handle aria-label="收起右侧"><CaretRight /></Handle></Gutter>
        <Side $w={281}>
          <Panel>
            <Grip><CloseMark /></Grip>
            <PanelTitle>显示设置</PanelTitle>
            <SettingTabs><SettingTab $on>图元显示</SettingTab><SettingTab>楼层显示</SettingTab></SettingTabs>
            <GridFrame>
              <ScrollBody>
                <SettingTable>
                  <thead><tr><th>图层构件</th><th>显示图元</th><th>显示名称</th></tr></thead>
                  <tbody>
                    {settings.map(([group, on, kids]) => (
                      <Fragment key={group}>
                        {group && (
                          <tr>
                            <td>
                              <TreeCell>
                                <Guide $w={9} /><Stub $w={3} />
                                <Fold><button aria-label={`折叠${group}`} /></Fold>
                                <CellText>{group}</CellText>
                              </TreeCell>
                            </td>
                            <CheckCell $focus={on}><Check aria-label={`${group}图元`} defaultChecked={on} /></CheckCell>
                            <CheckCell><Check aria-label={`${group}名称`} /></CheckCell>
                          </tr>
                        )}
                        {kids.map((k, i) => (
                          <tr key={k}>
                            <td>
                              <TreeCell>
                                <Guide $w={9} /><Guide $w={10} $half={i === kids.length - 1 && k !== ''} /><Stub $w={16} />
                                <CellText>{k}</CellText>
                              </TreeCell>
                            </td>
                            <CheckCell><Check aria-label={`${k}图元`} defaultChecked={on} /></CheckCell>
                            <CheckCell><Check aria-label={`${k}名称`} /></CheckCell>
                          </tr>
                        ))}
                      </Fragment>
                    ))}
                  </tbody>
                </SettingTable>
              </ScrollBody>
              <Track $w={14} $rows="96fr 185fr 458fr"><i /></Track>
            </GridFrame>
            <PanelFoot><ResetButton>恢复默认设置</ResetButton></PanelFoot>
          </Panel>
        </Side>
      </Main>

      <Status>
        <Field $w={263}>X = 10520 Y = 19899</Field>
        <Field $w={40}>层高：</Field>
        <Field $w={43}>3.2</Field>
        <Field $w={40}>标高：</Field>
        <Field $w={93}>4.95~8.15</Field>
        <Field $w={103}>0</Field>
        <Field $w={103}>隐藏：0</Field>
        <StatusGroup>
          <StatusButton $on aria-label="正交"><Icon name="ortho" /></StatusButton>
          <StatusButton $on $wide aria-label="捕捉"><Icon name="snapBox" /><Caret /></StatusButton>
        </StatusGroup>
        <StatusGroup><StatusButton aria-label="交点"><Icon name="cross" /></StatusButton></StatusGroup>
        <StatusGroup>
          <StatusButton $wide aria-label="角度"><Icon name="angle" /><Caret /></StatusButton>
          <StatusButton $wide aria-label="偏移点"><Icon name="offsetPt" /><Caret /></StatusButton>
          <StatusButton aria-label="多选"><Icon name="stack" /></StatusButton>
          <StatusButton aria-label="曲线选择"><Icon name="curve" /></StatusButton>
        </StatusGroup>
        <span>鼠标左键选择门窗洞口图元</span>
      </Status>

      <Taskbar>
        <TaskButton aria-label="开始">
          <svg width="16" height="16" viewBox="0 0 16 16"><path d="M0 2l7-1v6.500H0zM8 1l8-1v7.500H8zM0 8.500h7V15l-7-1zM8 8.500h8V16l-8-1z" fill="#000" /></svg>
        </TaskButton>
        <TaskSearch>
          <svg width="17" height="17" viewBox="0 0 17 17"><circle cx="10.500" cy="6" r="5" fill="none" stroke="#222" strokeWidth="1.300" /><D d="M7 10l-6 6" w={1.4} /></svg>
          <input aria-label="搜索" placeholder="在这里输入你要搜索的内容" />
        </TaskSearch>
        <TaskButton aria-label="Cortana">
          <svg width="16" height="16" viewBox="0 0 16 16"><circle cx="8" cy="8" r="6.800" fill="none" stroke="#000" strokeWidth="2" /></svg>
        </TaskButton>
        <TaskButton aria-label="任务视图">
          <svg width="17" height="16" viewBox="0 0 17 16"><D d="M.5 0v2.500h11V0M.5 16v-2.500h11V16M.5 5h11v6H.5zM15.500 0v5M15.500 10v6" w={1.2} /><path d="M14 6h3v3h-3z" /></svg>
        </TaskButton>
        <Apps>
          {Object.keys(apps).map(a => (
            <TaskButton key={a} $run $on={a === 'gtj'} aria-label={a}>
              <svg width="24" height="24" viewBox="0 0 24 24">{apps[a]}</svg>
            </TaskButton>
          ))}
        </Apps>
        <Tray>
          <button aria-label="隐藏的图标"><Icon name="up" /></button>
          <button aria-label="网络">
            <svg width="14" height="16" viewBox="0 0 14 16"><D d="M1 14C1 7 6 3 13 3M4 14c0-5 4-8 9-8M7 14c0-3 3-5 6-5" w={1.1} /><circle cx="11" cy="13" r="2" fill="#111" /></svg>
          </button>
          <button aria-label="音量">
            <svg width="18" height="16" viewBox="0 0 18 16"><D d="M1 5.500h3l4-4v13l-4-4H1z" w={1.1} /><D d="M10 6c1 1 1 3 0 4" /><path d="M12 4c2 2 2 6 0 8M14.500 2c3 3 3 9 0 12" fill="none" stroke="#8f9299" /></svg>
          </button>
          <button aria-label="手写">
            <svg width="17" height="16" viewBox="0 0 17 16"><D d="M5 14L7 9l5-8 2 1-4 8zM5 7C0 6 0 13 3 13s5-2 9-4 5-3 3-4" w={1.2} /></svg>
          </button>
          <Ime>英</Ime>
          <Clock>15:51<br />2022/4/29</Clock>
          <button aria-label="通知">
            <svg width="17" height="17" viewBox="0 0 17 17"><path d="M0 0h16v13H7l-4 3v-3H0z" fill="#000" /><path d="M3 4h10M3 7h10M3 10h6" stroke="#dfe2e8" /><path d="M11 8a4 4 0 104 6 4 4 0 01-4-6z" fill="#fff" stroke="#000" /></svg>
          </button>
          <Peek />
        </Tray>
      </Taskbar>
    </Shell>
  );
}
